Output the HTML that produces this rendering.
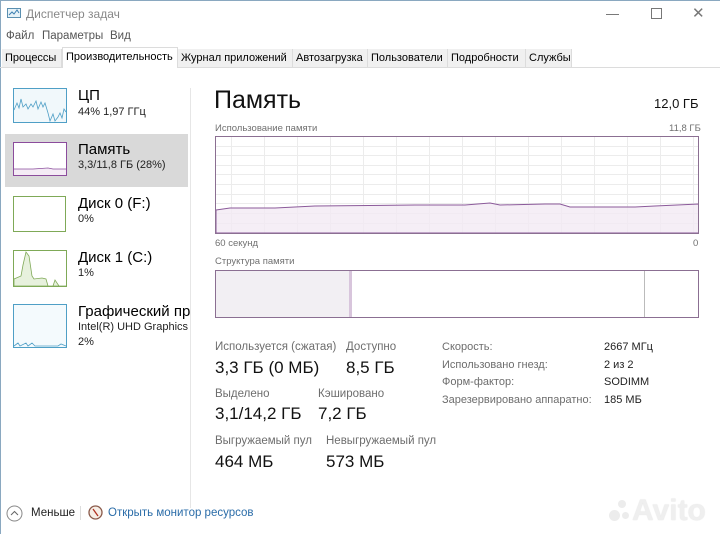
<!DOCTYPE html>
<html><head><meta charset="utf-8"><style>
body{margin:0;width:720px;height:534px;background:#fff;font-family:"Liberation Sans","DejaVu Sans",sans-serif;position:relative;overflow:hidden;color:#000}
.a{position:absolute;white-space:nowrap}
.g{color:#707070;font-size:9.5px}
.lbl{color:#6d6d6d;font-size:11.5px}
.big{font-size:17px;color:#111}
.tab{position:absolute;top:49px;height:18px;font-size:11px;line-height:18px;background:#f0f0f0;border-right:1px solid #dcdcdc;padding:0 3px;box-sizing:border-box}
.thumb{position:absolute;width:53px;box-sizing:border-box;background:#fff}
</style></head><body>
<div class="a" style="left:0;top:0;width:720px;height:1px;background:#8aa8c0"></div>
<div class="a" style="left:0;top:0;width:1px;height:534px;background:#8aa8c0"></div>
<svg class="a" style="left:7px;top:8px" width="14" height="12"><rect x="0.5" y="0.5" width="13" height="9" fill="#e6f2f8" stroke="#5a8fb0"/><path d="M2 7 L5 4 L7 6 L10 2 L12 5" stroke="#3c7fb1" fill="none"/></svg>
<div class="a" style="left:26px;top:7px;font-size:12px;color:#888">Диспетчер задач</div>
<div class="a" style="left:606px;top:6px;font-size:13px;color:#666">—</div>
<div class="a" style="left:651px;top:8px;width:9px;height:9px;border:1px solid #777"></div>
<div class="a" style="left:692px;top:4px;font-size:15px;color:#777">✕</div>
<div class="a" style="left:6px;top:30px;font-size:11.5px;color:#555">Файл</div>
<div class="a" style="left:42px;top:30px;font-size:11.5px;color:#555">Параметры</div>
<div class="a" style="left:110px;top:30px;font-size:11.5px;color:#555">Вид</div>
<div class="a" style="left:0;top:67px;width:720px;height:1px;background:#dcdcdc"></div>
<div class="tab" style="left:2px;width:60px">Процессы</div>
<div class="tab" style="left:62px;width:116px;top:47px;height:21px;background:#fff;border:1px solid #dcdcdc;border-bottom:none">Производительность</div>
<div class="tab" style="left:178px;width:115px">Журнал приложений</div>
<div class="tab" style="left:293px;width:75px">Автозагрузка</div>
<div class="tab" style="left:368px;width:80px">Пользователи</div>
<div class="tab" style="left:448px;width:78px">Подробности</div>
<div class="tab" style="left:526px;width:46px">Службы</div>
<div class="a" style="left:190px;top:88px;width:1px;height:420px;background:#e6e6e6"></div>
<svg class="a" style="left:13px;top:88px" width="55" height="36"><rect x="0.5" y="0.5" width="53" height="34" fill="#f1f8fb" stroke="#4f9fc6"/><path d="M1 22 L4 15 L6 20 L8 11 L10 19 L13 16 L15 21 L18 16 L20 19 L23 13 L25 21 L28 14 L30 19 L32 15 L35 25 L37 33 L40 26 L42 33 L45 29 L47 25 L49 30 L51 21 L53 24" stroke="#4f9fc6" fill="none" stroke-width="0.8"/></svg>
<div class="a" style="left:78px;top:87px;font-size:15px">ЦП</div>
<div class="a" style="left:78px;top:106px;font-size:11px;color:#222">44% 1,97 ГГц</div>
<div class="a" style="left:5px;top:134px;width:183px;height:53px;background:#d9d9d9"></div>
<svg class="a" style="left:13px;top:142px" width="55" height="35"><rect x="0.5" y="0.5" width="53" height="33" fill="#fff" stroke="#8b4c9c"/><rect x="1" y="27" width="52" height="6" fill="#f4ebf5"/><path d="M1 27 L20 27 L35 26 L40 27 L53 27" stroke="#8b4c9c" fill="none" stroke-width="0.8"/></svg>
<div class="a" style="left:78px;top:141px;font-size:15px">Память</div>
<div class="a" style="left:78px;top:159px;font-size:11px;color:#222">3,3/11,8 ГБ (28%)</div>
<div class="thumb" style="left:13px;top:196px;height:36px;border:1px solid #7fa957"></div>
<div class="a" style="left:78px;top:195px;font-size:15px">Диск 0 (F:)</div>
<div class="a" style="left:78px;top:213px;font-size:11px;color:#222">0%</div>
<svg class="a" style="left:13px;top:250px" width="55" height="38"><rect x="0.5" y="0.5" width="53" height="36" fill="#fff" stroke="#7fa957"/><path d="M1 29 L8 26 L10 15 L13 2 L16 6 L19 26 L21 29 L29 28 L33 29 L35 36 L40 36 L42 30 L46 36 L53 36 L53 36 L1 36 Z" fill="#e7f1dd" stroke="#7fa957" stroke-width="0.8"/></svg>
<div class="a" style="left:78px;top:249px;font-size:15px">Диск 1 (C:)</div>
<div class="a" style="left:78px;top:267px;font-size:11px;color:#222">1%</div>
<svg class="a" style="left:13px;top:304px" width="55" height="45"><rect x="0.5" y="0.5" width="53" height="43" fill="#f4fafd" stroke="#4f9fc6"/><path d="M1 42 L5 39 L7 42 L13 39 L15 42 L19 39 L22 42 L45 42 L48 40 L53 42" stroke="#4f9fc6" fill="none" stroke-width="0.8"/></svg>
<div class="a" style="left:78px;top:303px;font-size:15px;width:112px;overflow:hidden">Графический процессор</div>
<div class="a" style="left:78px;top:321px;font-size:11px;color:#222">Intel(R) UHD Graphics</div>
<div class="a" style="left:78px;top:336px;font-size:11px;color:#222">2%</div>
<div class="a" style="left:214px;top:86px;font-size:25px;color:#111">Память</div>
<div class="a" style="left:654px;top:96px;font-size:13px;color:#111">12,0 ГБ</div>
<div class="a g" style="left:215px;top:123px">Использование памяти</div>
<div class="a g" style="left:669px;top:123px">11,8 ГБ</div>
<svg class="a" style="left:215px;top:136px" width="484" height="98">
<g stroke="#ececec" stroke-width="1">
<path d="M0 10.5H484M0 19.5H484M0 29.5H484M0 38.5H484M0 48.5H484M0 58.5H484M0 67.5H484M0 77.5H484M0 87.5H484"/>
<path d="M16.5 0V98M49.5 0V98M82.5 0V98M115.5 0V98M148.5 0V98M181.5 0V98M214.5 0V98M247.5 0V98M280.5 0V98M313.5 0V98M346.5 0V98M379.5 0V98M412.5 0V98M445.5 0V98M478.5 0V98"/>
</g>
<path d="M1 74 L15 72 L60 72 L100 70 L200 69 L250 69 L275 67 L285 69 L330 68 L345 68 L355 71 L420 71 L440 70 L484 68 L484 97 L1 97 Z" fill="#f3eaf4" fill-opacity="0.8" stroke="#8b5a9a" stroke-width="1"/>
<rect x="0.5" y="0.5" width="483" height="97" fill="none" stroke="#8b6f92"/>
</svg>
<div class="a g" style="left:215px;top:238px">60 секунд</div>
<div class="a g" style="left:693px;top:238px">0</div>
<div class="a g" style="left:215px;top:256px">Структура памяти</div>
<svg class="a" style="left:215px;top:270px" width="484" height="48"><rect x="1" y="1" width="133" height="46" fill="#f2eff3"/><rect x="134" y="1" width="3" height="46" fill="#d8c5dc"/><path d="M429.5 1V47" stroke="#bbb"/><rect x="0.5" y="0.5" width="483" height="47" fill="none" stroke="#8b6f92"/></svg>
<div class="a lbl" style="left:215px;top:341px">Используется (сжатая)</div>
<div class="a lbl" style="left:346px;top:341px">Доступно</div>
<div class="a big" style="left:215px;top:358px">3,3 ГБ (0 МБ)</div>
<div class="a big" style="left:346px;top:358px">8,5 ГБ</div>
<div class="a lbl" style="left:215px;top:388px">Выделено</div>
<div class="a lbl" style="left:318px;top:388px">Кэшировано</div>
<div class="a big" style="left:215px;top:404px">3,1/14,2 ГБ</div>
<div class="a big" style="left:318px;top:404px">7,2 ГБ</div>
<div class="a lbl" style="left:215px;top:435px">Выгружаемый пул</div>
<div class="a lbl" style="left:326px;top:435px">Невыгружаемый пул</div>
<div class="a big" style="left:215px;top:452px">464 МБ</div>
<div class="a big" style="left:326px;top:452px">573 МБ</div>
<div class="a lbl" style="left:442px;top:341px;font-size:11px">Скорость:</div>
<div class="a lbl" style="left:442px;top:359px;font-size:11px">Использовано гнезд:</div>
<div class="a lbl" style="left:442px;top:376px;font-size:11px">Форм-фактор:</div>
<div class="a lbl" style="left:442px;top:394px;font-size:11px">Зарезервировано аппаратно:</div>
<div class="a" style="left:604px;top:341px;font-size:11px;color:#222">2667 МГц</div>
<div class="a" style="left:604px;top:359px;font-size:11px;color:#222">2 из 2</div>
<div class="a" style="left:604px;top:376px;font-size:11px;color:#222">SODIMM</div>
<div class="a" style="left:604px;top:394px;font-size:11px;color:#222">185 МБ</div>
<svg class="a" style="left:6px;top:505px" width="17" height="17"><circle cx="8.5" cy="8.5" r="7.5" fill="none" stroke="#888"/><path d="M5 10 L8.5 6.5 L12 10" fill="none" stroke="#666"/></svg>
<div class="a" style="left:31px;top:507px;font-size:11.5px;color:#222">Меньше</div>
<div class="a" style="left:80px;top:506px;width:1px;height:14px;background:#ddd"></div>
<svg class="a" style="left:88px;top:505px" width="15" height="15"><circle cx="7.5" cy="7.5" r="6.5" fill="#f6eee6" stroke="#8a5a4a" stroke-width="1.3"/><path d="M5 4 L10 11" stroke="#b03020" stroke-width="1.3"/></svg>
<div class="a" style="left:108px;top:507px;font-size:11.5px;color:#2a6ca8">Открыть монитор ресурсов</div>
<div class="a" style="left:632px;top:494px;font-size:30px;font-weight:bold;color:#efefef;text-shadow:0 0 1px #d8d8d8">Avito</div>
<div class="a" style="left:618px;top:500px;width:8px;height:8px;border-radius:50%;background:#ececec"></div>
<div class="a" style="left:609px;top:510px;width:11px;height:11px;border-radius:50%;background:#ececec"></div>
<div class="a" style="left:622px;top:512px;width:7px;height:7px;border-radius:50%;background:#ececec"></div>
</body></html>
